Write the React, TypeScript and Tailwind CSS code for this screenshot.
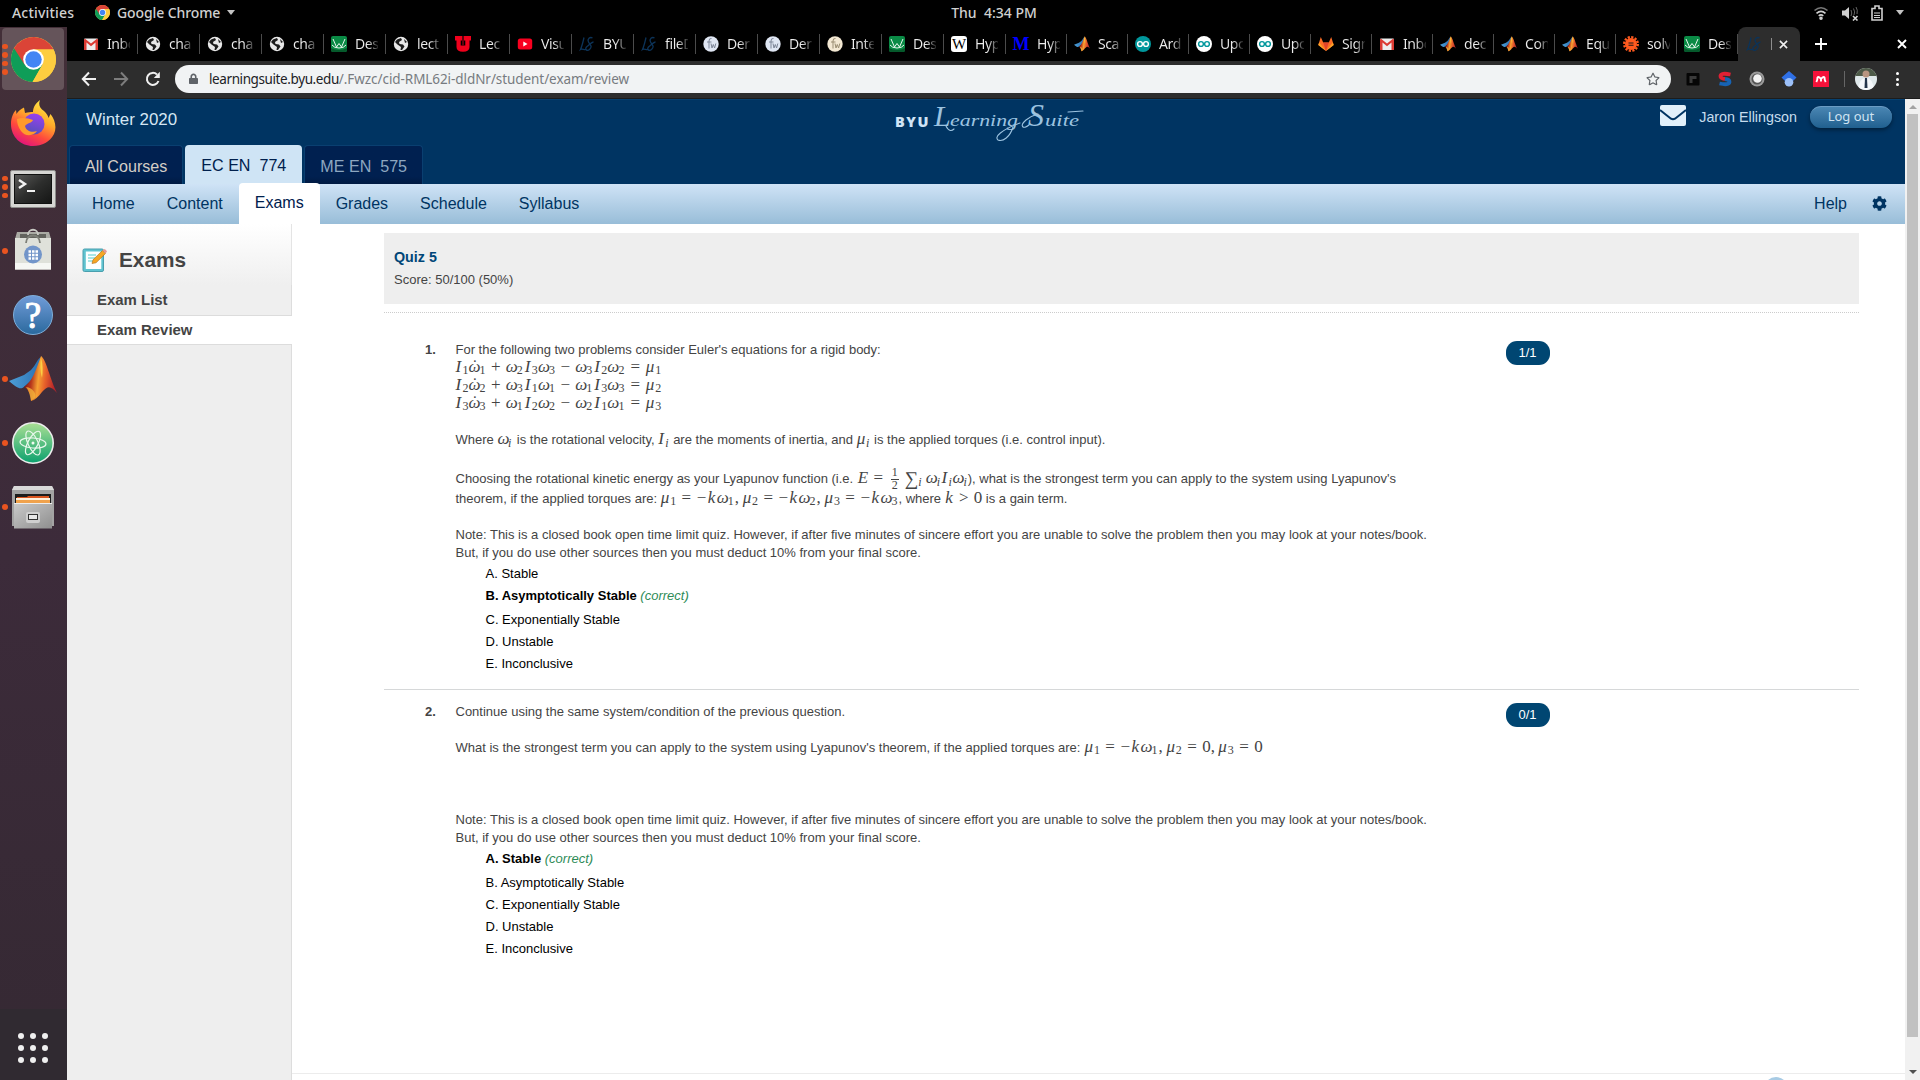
import React from "react";
import { FaCog, FaRegStar, FaLock } from "react-icons/fa";

/* ---------- favicons ---------- */

const ChromeLogo = ({ className }: { className: string }) => (
  <svg viewBox="0 0 48 48" className={className}>
    <circle cx="24" cy="24" r="24" fill="#fdcd40" />
    <path d="M24 24 L3.2 12 A24 24 0 0 0 23 48 L33.5 29.5Z" fill="#0f9d58" />
    <path d="M24 13 L45.3 13 A24 24 0 0 1 23 48 L33.5 29.5 A11 11 0 0 0 24 13Z" fill="#fdcd40" />
    <path d="M3.2 12 L14.5 29.5 L24 13 L45.3 13 A24 24 0 0 0 3.2 12Z" fill="#db4437" />
    <circle cx="24" cy="24" r="11" fill="#fff" />
    <circle cx="24" cy="24" r="8.8" fill="#4285f4" />
  </svg>
);

const Gmail = () => (
  <svg viewBox="0 0 16 16" className="size-4">
    <rect x="1" y="2.5" width="14" height="11.5" rx="1" fill="#eee" />
    <path d="M1 3.5 V14 H3.5 V6.5 L8 10.3 L12.500 6.500 V14 H15 V3.500 L14 2.700 L8 7.500 L2 2.700Z" fill="#dc3c34" />
  </svg>
);
const Globe = () => (
  <svg viewBox="0 0 16 16" className="size-4">
    <circle cx="8" cy="8" r="7.2" fill="#e8e8e8" />
    <path d="M4 3.500 L8 2 L9 4 L6 6 L6.500 8 L10 8.500 L11.500 10.500 L9 14 L7.500 14 L8 11 L4.500 8.500 L2 6Z" fill="#1c1c1c" />
    <path d="M11 3 L14 6 L12 7Z" fill="#1c1c1c" />
  </svg>
);
const Design = () => (
  <svg viewBox="0 0 16 16" className="size-4">
    <rect width="16" height="16" rx="2" fill="#0a8a45" />
    <path d="M0 12 Q8 16 16 12 V14 Q16 16 14 16 H2 Q0 16 0 14Z" fill="#05592b" />
    <path d="M2 3 L5.500 11 L8 7.500 L10.500 11 L14 3 M1 9 Q3 12 8 12 Q13 12 15 9" fill="none" stroke="#e9f6ee" strokeWidth="1" />
  </svg>
);
const Utah = () => (
  <svg viewBox="0 0 16 16" className="size-4">
    <path d="M0 0 H7 V4.500 H5.700 V9.500 H10.300 V4.500 H9 V0 H16 V4.500 H14.500 V11 Q14.500 15.800 8 15.800 Q1.500 15.800 1.500 11 V4.500 H0Z" fill="#f0001c" />
    <path d="M7.600 0 H8.400 V9 H7.600Z" fill="#f0001c" />
  </svg>
);
const YouTube = () => (
  <svg viewBox="0 0 16 16" className="size-4">
    <rect x="0.800" y="2.500" width="14.400" height="11" rx="2.500" fill="#f9001f" />
    <path d="M6.300 5.500 L10.500 8 L6.300 10.500Z" fill="#fff" />
  </svg>
);
const Suite = () => (
  <svg viewBox="0 0 16 16" className="size-4">
    <path
      d="M5 1.500 C4 6 3 10 1.500 13.500 C3 12.500 5 14 7 13.500 M13.500 2 C11 0.500 8 3 9.500 6 C11 9 14 10 10.500 13.500 C8 15.500 5 13 8 10.500 C10 9 13 6 14.500 6"
      fill="none"
      stroke="#0c3358"
      strokeWidth="1.300"
    />
  </svg>
);
const Wolfram = ({ tone = "#dfe6f3", ink = "#7d8698" }: { tone?: string; ink?: string }) => (
  <svg viewBox="0 0 16 16" className="size-4">
    <circle cx="8" cy="8" r="7.700" fill={tone} />
    <path d="M8.500 2.500 Q6 2 6 5 V12.500 M4 6 H8.500 M8 7.500 L9 12 L10.300 8.500 L11.600 12 L12.800 7.500" fill="none" stroke={ink} strokeWidth="1" />
  </svg>
);
const Wiki = () => (
  <span className="flex size-4 items-center justify-center overflow-hidden rounded-[3px] bg-white font-['Liberation_Serif'] text-[15px] leading-none text-black">W</span>
);
const BlueM = () => (
  <span className="flex size-4 items-center justify-center font-['Liberation_Serif'] text-[18px] leading-none font-bold text-[#0000ff]">M</span>
);
const Matlab = ({ className = "size-4" }: { className?: string }) => (
  <svg viewBox="0 0 48 46" className={className}>
    <defs>
      <linearGradient id="mlo" x1="0" y1="0" x2="1" y2="0.150">
        <stop offset="0" stopColor="#5d0f14" />
        <stop offset="0.300" stopColor="#b8371c" />
        <stop offset="0.500" stopColor="#f6a032" />
        <stop offset="0.700" stopColor="#e8622a" />
        <stop offset="1" stopColor="#b5232a" />
      </linearGradient>
      <linearGradient id="mlb" x1="0" y1="0" x2="1" y2="0">
        <stop offset="0" stopColor="#4d9fd8" />
        <stop offset="1" stopColor="#2a6fb0" />
      </linearGradient>
    </defs>
    <path d="M0 25 L15 19 L22 14 C27 9 28 3 32 1 L27 20 L16 30 C12 34 9 33 0 25Z" fill="url(#mlb)" />
    <path d="M32 0 C37 3 41 23 48 37 C42 30 39 29 33 36 C29 41 26 44 22 45 C22 38 19 33 15 31 C23 26 27 14 32 0Z" fill="url(#mlo)" />
    <path d="M22 45 C21 38 19 33 17 31 C24 32 28 38 26 42Z" fill="#f3b03a" opacity=".8" />
    <path d="M32 2 C34 8 34 16 33 22 C31 16 31 8 32 2Z" fill="#ffe04a" opacity=".8" />
  </svg>
);
const Arduino = ({ inverse = false }: { inverse?: boolean }) => (
  <svg viewBox="0 0 16 16" className="size-4">
    <circle cx="8" cy="8" r="8" fill={inverse ? "#fff" : "#00979c"} />
    <g fill="none" stroke={inverse ? "#00979c" : "#fff"} strokeWidth="1.400">
      <circle cx="5" cy="8" r="2.400" />
      <circle cx="11" cy="8" r="2.400" />
    </g>
  </svg>
);
const GitLab = () => (
  <svg viewBox="0 0 16 16" className="size-4">
    <path d="M8 15 L0.300 9 L2.800 1 L5.200 6.500 H10.800 L13.200 1 L15.700 9Z" fill="#fc6d26" />
    <path d="M8 15 L5.200 6.500 H10.800Z" fill="#e24329" />
    <path d="M8 15 L0.300 9 L1.200 6.500Z" fill="#fca326" />
    <path d="M8 15 L15.700 9 L14.800 6.500Z" fill="#fca326" />
  </svg>
);
const Burst = () => (
  <svg viewBox="0 0 16 16" className="size-4">
    <circle cx="8" cy="8" r="6" fill="#ff5a1f" />
    <circle cx="8" cy="8" r="6.800" fill="none" stroke="#ff5a1f" strokeWidth="2.400" strokeDasharray="2.200 1.360" />
    <path d="M5.500 7 H10.500 M5.500 9.300 H10.500" stroke="#1a1a1a" strokeWidth="1.100" />
  </svg>
);

/* ---------- browser tabs ---------- */

type Tab = { icon: React.ReactNode; title: string };

const wideTabs: Tab[] = [
  { icon: <Gmail />, title: "Inbo" },
  { icon: <Globe />, title: "cha" },
  { icon: <Globe />, title: "cha" },
  { icon: <Globe />, title: "cha" },
  { icon: <Design />, title: "Des" },
  { icon: <Globe />, title: "lect" },
  { icon: <Utah />, title: "Lec" },
  { icon: <YouTube />, title: "Visu" },
  { icon: <Suite />, title: "BYU" },
  { icon: <Suite />, title: "fileD" },
  { icon: <Wolfram />, title: "Der" },
  { icon: <Wolfram />, title: "Der" },
  { icon: <Wolfram tone="#f3e8d3" ink="#9a8d72" />, title: "Inte" },
  { icon: <Design />, title: "Des" },
  { icon: <Wiki />, title: "Hyp" },
];
const narrowTabs: Tab[] = [
  { icon: <BlueM />, title: "Hyp" },
  { icon: <Matlab />, title: "Sca" },
  { icon: <Arduino />, title: "Ard" },
  { icon: <Arduino inverse />, title: "Upc" },
  { icon: <Arduino inverse />, title: "Upc" },
  { icon: <GitLab />, title: "Sign" },
  { icon: <Gmail />, title: "Inbo" },
  { icon: <Matlab />, title: "dec" },
  { icon: <Matlab />, title: "Con" },
  { icon: <Matlab />, title: "Equ" },
  { icon: <Burst />, title: "solv" },
  { icon: <Design />, title: "Des" },
];

const BrowserTab = ({ tab, wide }: { tab: Tab; wide?: boolean }) => (
  <div className={(wide ? "w-[62px]" : "w-[61px]") + " flex h-5 shrink-0 items-center border-r border-[#4b4b4b] pl-[7px]"}>
    {tab.icon}
    <span className="ml-2 w-[22.500px] overflow-hidden bg-linear-to-r from-[#ededed] from-55% to-[#ededed]/15 bg-clip-text text-[14px] leading-5 tracking-[-0.400px] whitespace-nowrap text-transparent">
      {tab.title}
    </span>
  </div>
);

/* ---------- dock ---------- */

const Firefox = () => (
  <svg viewBox="0 0 46 46" className="size-[46px]">
    <defs>
      <linearGradient id="ff" x1="0.800" y1="0" x2="0.300" y2="1">
        <stop offset="0" stopColor="#fff04a" />
        <stop offset="0.400" stopColor="#ffab2a" />
        <stop offset="0.700" stopColor="#ff4a3c" />
        <stop offset="1" stopColor="#e0127e" />
      </linearGradient>
      <linearGradient id="ffp" x1="0.700" y1="0" x2="0.400" y2="1">
        <stop offset="0" stopColor="#9a40f0" />
        <stop offset="1" stopColor="#5350b8" />
      </linearGradient>
    </defs>
    <path
      d="M30 0 C28 5 30 8 34 11 C36 13 38 15 38.500 18 L40.500 14 C45 20 47 27 44 34 C40 42 32 46 23 46 C11 46 1 37 1 24 C1 18 3 13 6 10 L6.500 14 C8 11 11 9 14 7.500 L15 13 C18 12 21 12 23 12 C23 7 26 3 30 0Z"
      fill="url(#ff)"
    />
    <circle cx="24" cy="24" r="10.500" fill="url(#ffp)" />
    <path d="M7 19 C12 17 18 18 23 20 C22 23 17 23 15 26 C16 31 22 33 27 31 C24 36 15 37 11 31 C8 27 7 23 7 19Z" fill="#ff9a2c" />
  </svg>
);
const Terminal = () => (
  <svg viewBox="0 0 46 38" className="mt-[3px] h-[38px] w-[46px]">
    <defs>
      <linearGradient id="tm" x1="0" y1="0" x2="1" y2="1">
        <stop offset="0" stopColor="#5a5a58" />
        <stop offset="0.500" stopColor="#2d2e2d" />
        <stop offset="1" stopColor="#151615" />
      </linearGradient>
    </defs>
    <rect x="0.500" y="0.500" width="45" height="37" rx="1.500" fill="#d6d6d3" stroke="#8c8c8a" />
    <rect x="4" y="4" width="38" height="30" fill="#101110" />
    <rect x="5" y="5" width="36" height="28" fill="url(#tm)" />
    <path d="M9 10 L15 14 L9 18" fill="none" stroke="#f2f2f2" strokeWidth="2.400" />
    <path d="M17 21 H25" stroke="#f2f2f2" strokeWidth="2" />
  </svg>
);
const Software = () => (
  <svg viewBox="0 0 38 42" className="mb-[4px] h-[42px] w-[38px]">
    <path d="M3 4 H35 L37 11 H1Z" fill="#a9aaa3" />
    <path d="M6 6 H32 V11 H6Z" fill="#63645e" />
    <path d="M1 10 H37 L37 41.500 H1Z" fill="#dfe1da" />
    <path d="M1 35 H37 V41.500 H1Z" fill="#f6f7f4" />
    <path d="M14 7 C14 0 24 0 24 7" fill="none" stroke="#c9cac4" strokeWidth="1.800" />
    <path d="M12 15 C12 5 26 5 26 15" fill="none" stroke="#7e8078" strokeWidth="1.800" />
    <circle cx="19" cy="26.500" r="9" fill="#7295c9" />
    <path d="M14.500 23.500h2.500M18 23.500h2.500M21.500 23.500h2.500M14.500 27h2.500M18 27h2.500M21.500 27h2.500M14.500 30.500h2.500M18 30.500h2.500M21.500 30.500h2.500" stroke="#fff" strokeWidth="2.400" />
  </svg>
);
const Help = () => (
  <div className="flex size-[40px] items-center justify-center rounded-full border border-[#7fb0dc] bg-linear-to-b from-[#6f9bd8] to-[#2a6a9e] font-['Liberation_Serif'] text-[37px] leading-none text-white [-webkit-text-stroke:1px_#fff]">
    ?
  </div>
);
const Atom = () => (
  <svg viewBox="0 0 42 42" className="size-[42px]">
    <defs>
      <linearGradient id="at" x1="0" y1="0" x2="0" y2="1">
        <stop offset="0" stopColor="#aadf94" />
        <stop offset="1" stopColor="#0ba16e" />
      </linearGradient>
    </defs>
    <circle cx="21" cy="21" r="20.200" fill="url(#at)" stroke="#ececec" strokeWidth="1.600" />
    <g fill="none" stroke="#e9f7ec" strokeWidth="1.200">
      <ellipse cx="21" cy="21" rx="13" ry="5" transform="rotate(5 21 21)" />
      <ellipse cx="21" cy="21" rx="13" ry="5" transform="rotate(65 21 21)" />
      <ellipse cx="21" cy="21" rx="13" ry="5" transform="rotate(118 21 21)" />
    </g>
    <circle cx="21" cy="21" r="1.500" fill="#f2fbf3" />
  </svg>
);
const Files = () => (
  <svg viewBox="0 0 42 44" className="mb-px h-[44px] w-[42px]">
    <defs>
      <linearGradient id="fl" x1="0" y1="0" x2="1" y2="1">
        <stop offset="0" stopColor="#c9c9c9" />
        <stop offset="1" stopColor="#8f8f8f" />
      </linearGradient>
    </defs>
    <path d="M2 1 H40 L42 5 V41 H0 V5Z" fill="#a3a3a3" />
    <path d="M2 1 H40 L42 5 H0Z" fill="#d9d9d9" />
    <rect x="3" y="9" width="36" height="12" fill="#1c1c1c" />
    <path d="M5 12 H15 L16 11 H37 V19 H4Z" fill="#d9541e" />
    <rect x="4" y="13" width="34" height="2" fill="#fff1dc" />
    <rect x="4" y="15" width="34" height="4" fill="#f0a24c" />
    <path d="M2 18.500 H40 V43.500 H2Z" fill="url(#fl)" />
    <path d="M2 18.500 H40" stroke="#ededed" />
    <rect x="14" y="27" width="14" height="11" rx="2" fill="#cfcfcf" />
    <rect x="16.500" y="29.500" width="9" height="5" fill="#e8e8e8" stroke="#333" />
  </svg>
);

const dock: { icon: React.ReactNode; dots: number; active?: boolean }[] = [
  { icon: <ChromeLogo className="size-[45px]" />, dots: 4, active: true },
  { icon: <Firefox />, dots: 0 },
  { icon: <Terminal />, dots: 3 },
  { icon: <Software />, dots: 1 },
  { icon: <Help />, dots: 0 },
  { icon: <Matlab className="h-[46px] w-[48px]" />, dots: 1 },
  { icon: <Atom />, dots: 1 },
  { icon: <Files />, dots: 1 },
];

const Dock = () => (
  <aside className="flex w-[67px] shrink-0 flex-col bg-linear-to-b from-[#432f38] via-[#3c2b3a] to-[#352933]">
    {dock.map((d, n) => (
      <div key={n} className="flex h-16 items-center px-0.5">
        <div className={(d.active ? "bg-[#65545a] " : "") + "flex h-[62px] w-[62px] items-center rounded-[4px]"}>
          <div className="flex w-1.5 shrink-0 flex-col items-center gap-[3px]">
            {Array.from({ length: d.dots }, (_, k) => (
              <i key={k} className="size-[5.500px] rounded-full bg-[#e95420]" />
            ))}
          </div>
          <div className="flex w-[50px] shrink-0 justify-center">{d.icon}</div>
        </div>
      </div>
    ))}
    <div className="mt-auto flex h-[71px] items-center justify-center bg-[#302a31] pt-[7px] pr-px">
      <div className="grid grid-cols-3 gap-1.5">
        {Array.from({ length: 9 }, (_, k) => (
          <i key={k} className="size-1.5 rounded-full bg-[#f0f0f0]" />
        ))}
      </div>
    </div>
  </aside>
);

/* ---------- mathematics ---------- */

type Cell = [glyph: string, kind: "i" | "r" | "o" | "s" | "t" | "d" | "b", width: number];

const kinds = {
  i: "text-[17px] italic",
  r: "text-[17px]",
  o: "text-[17px] text-center",
  s: "text-[12px] align-[-2px]",
  t: "text-[12px] italic align-[-3px]",
  d: "text-[17px] align-[1px]",
  b: "text-[19px] align-[-2px]",
};

const Formula = ({ cells }: { cells: Cell[] }) => (
  <span className="font-['Liberation_Serif'] whitespace-nowrap">
    {cells.map(([g, k, w], n) => (
      <span key={n} className={kinds[k] + " inline-block leading-[0]"} style={{ width: w }}>
        {g}
      </span>
    ))}
  </span>
);

const euler = (a: string, b: string, c: string): Cell[] => [
  ["I", "i", 7], [a, "s", 6], ["ω", "i", 3.5], ["˙", "d", 7.5], [a, "s", 6.3], ["+", "o", 20],
  ["ω", "i", 11], [b, "s", 8], ["I", "i", 7], [c, "s", 6.2], ["ω", "i", 11], [c, "s", 6.2], ["−", "o", 20],
  ["ω", "i", 11], [c, "s", 8], ["I", "i", 7], [b, "s", 6.2], ["ω", "i", 11.2], [b, "s", 6.2], ["=", "o", 21],
  ["μ", "i", 9.5], [a, "s", 6],
];
const torque = (n: string, comma: boolean): Cell[] => [
  ["μ", "i", 9.4], [n, "s", 6], ["=", "o", 20.500], ["−", "r", 11], ["k", "i", 9], ["ω", "i", 11], [n, "s", 7],
  ...(comma ? ([[",", "r", 8]] as Cell[]) : []),
];

/* ---------- questions ---------- */

const Option = ({ text, correct }: { text: string; correct?: boolean }) => (
  <li className={correct ? "h-6 font-bold" : "h-[22px]"}>
    {text}
    {correct && <em className="font-normal text-[#2e8b57]"> (correct)</em>}
  </li>
);

const Note = () => (
  <p>
    Note: This is a closed book open time limit quiz. However, if after five minutes of sincere effort you are unable to solve the problem then you may look at your notes/book.
    <br />
    But, if you do use other sources then you must deduct 10% from your final score.
  </p>
);

const answers = ["A. Stable", "B. Asymptotically Stable", "C. Exponentially Stable", "D. Unstable", "E. Inconclusive"];

const Question = ({ no, score, correct, children }: { no: number; score: string; correct: number; children: React.ReactNode }) => (
  <div className="flex text-[13px] leading-[18px] text-[#444]">
    <b className="ml-[41px] w-[30.500px] shrink-0">{no}.</b>
    <div className="w-[1050px] shrink-0 whitespace-nowrap">
      {children}
      <ul className="mt-[3px] ml-[30px] text-black">
        {answers.map((a, n) => (
          <Option key={a} text={a} correct={n === correct} />
        ))}
      </ul>
    </div>
    <span className="flex h-6 w-11 items-center justify-center rounded-[11px] bg-[#004672] text-white">{score}</span>
  </div>
);

/* ---------- page ---------- */

const Logo = () => (
  <div className="flex h-[46px] items-start pl-[7px]">
    <span className="pt-[15px] font-['Open_Sans'] text-[14.500px] leading-none font-extrabold tracking-[1.600px] text-[#cfe4f6]">BYU</span>
    <svg viewBox="0 0 152 46" className="ml-[2px] h-[46px] w-[152px]" fill="#9cc3e0">
      <g fontFamily="Liberation Serif" fontStyle="italic" fontWeight="400">
        <text x="2" y="26" fontSize="30">L</text>
        <text x="18" y="26" fontSize="17" textLength="68" lengthAdjust="spacingAndGlyphs">earning</text>
        <text x="96" y="26" fontSize="32">S</text>
        <text x="113" y="26" fontSize="17" textLength="34" lengthAdjust="spacingAndGlyphs">uite</text>
      </g>
      <g fill="none" stroke="#9cc3e0" strokeWidth="1.100" strokeLinecap="round">
        <path d="M81 27 C78 37 71 42 66 40 C62 37 69 30 88 23" />
        <path d="M97 25 C91 30 87 26 94 20 C98 17 102 15 106 14" />
        <path d="M14 26 C17 32 20 31 22 29" />
        <path d="M136 12 L151 11" />
      </g>
    </svg>
  </div>
);

const courseTab = "flex h-[39px] items-center rounded-t-[4px] px-4 whitespace-pre";

export default function App() {
  return (
    <div className="flex h-[1080px] w-[1920px] flex-col overflow-hidden bg-black font-['Liberation_Sans',sans-serif]">
      {/* system bar */}
      <div className="grid h-[27px] shrink-0 grid-cols-[1fr_auto_1fr] items-center pb-[2px] font-['Noto_Sans'] text-[14px] font-medium text-[#d0d0d0]">
        <div className="flex items-center pl-3">
          <span className="w-[83px] tracking-[0.200px]">Activities</span>
          <ChromeLogo className="size-[15px]" />
          <span className="ml-[7px] w-[110px] tracking-[-0.100px]">Google Chrome</span>
          <i className="border-x-[4.500px] border-t-[5px] border-x-transparent border-t-[#c4c4c4]" />
        </div>
        <span className="pl-[68px] whitespace-pre">Thu  4:34 PM</span>
        <div className="flex items-center justify-end pr-4">
          <svg viewBox="0 0 16 16" className="mr-3 size-4" fill="none" stroke="#d0d0d0" strokeWidth="1.600">
            <path d="M1.500 5.500 Q8 0 14.500 5.500" stroke="#777" />
            <path d="M3.500 8.300 Q8 4.500 12.500 8.300" />
            <path d="M5.700 10.800 Q8 9 10.300 10.800" />
            <circle cx="8" cy="13.300" r="1" fill="#d0d0d0" />
          </svg>
          <svg viewBox="0 0 18 16" className="mr-3 h-4 w-[18px]">
            <path d="M1 5.500 H4 L8 2 V14 L4 10.500 H1Z" fill="#d0d0d0" />
            <path d="M10 5 Q11.500 8 10 11 M12.500 3.500 Q14.500 7 13 10 M15 2 Q17 5 16 9" stroke="#666" fill="none" />
            <path d="M12 11 L16.500 15.500 M16.500 11 L12 15.500" stroke="#d0d0d0" strokeWidth="1.600" />
          </svg>
          <svg viewBox="0 0 12 16" className="mr-[13px] h-4 w-3" fill="none" stroke="#d0d0d0">
            <path d="M1 3.500 H4 V1 H8 V3.500 H11 V15 H1Z" strokeWidth="1.600" />
            <path d="M3 8 H9 M3 10.500 H9 M3 12.500 H9" strokeWidth="1.200" />
          </svg>
          <i className="border-x-[4.500px] border-t-[5px] border-x-transparent border-t-[#c4c4c4]" />
        </div>
      </div>

      <div className="flex min-h-0 grow">
        <Dock />
        <div className="flex min-w-0 grow flex-col">
          {/* tab strip */}
          <div className="flex h-[34px] shrink-0 items-center bg-black pl-[9px] font-['Noto_Sans'] text-white">
            {wideTabs.map((t, n) => (
              <BrowserTab key={n} tab={t} wide />
            ))}
            {narrowTabs.map((t, n) => (
              <BrowserTab key={n} tab={t} />
            ))}
            <div className="flex h-full w-[62px] shrink-0 items-center rounded-t-[8px] bg-[#2d2d2d] pl-2">
              <Suite />
              <i className="ml-[9px] h-3 w-px bg-[#8d8d8d]" />
              <svg viewBox="0 0 10 10" className="ml-[7px] size-[9px]">
                <path d="M1 1 L9 9 M9 1 L1 9" stroke="#eee" strokeWidth="1.800" />
              </svg>
            </div>
            <svg viewBox="0 0 12 12" className="ml-[15px] size-3">
              <path d="M6 0 V12 M0 6 H12" stroke="#fff" strokeWidth="1.900" />
            </svg>
            <svg viewBox="0 0 10 10" className="ml-[70px] size-[10px]">
              <path d="M1 1 L9 9 M9 1 L1 9" stroke="#fff" strokeWidth="1.900" />
            </svg>
          </div>

          {/* toolbar */}
          <div className="flex h-[38px] shrink-0 items-center border-b border-[#1c1c1c] bg-[#2d2d2d] pb-px pl-[14px] font-['Noto_Sans']">
            <svg viewBox="0 0 16 16" className="size-4" fill="none" stroke="#f0f0f0" strokeWidth="2">
              <path d="M15 8 H2 M8 1.500 L1.800 8 L8 14.500" />
            </svg>
            <svg viewBox="0 0 16 16" className="ml-4 size-4" fill="none" stroke="#7d7d7d" strokeWidth="2">
              <path d="M1 8 H14 M8 1.500 L14.200 8 L8 14.500" />
            </svg>
            <svg viewBox="0 0 16 16" className="ml-4 size-4" fill="none" stroke="#f0f0f0" strokeWidth="2">
              <path d="M13.500 10 A6 6 0 1 1 12 3.500" />
              <path d="M14.800 0.800 V7 H8.800Z" fill="#f0f0f0" stroke="none" />
            </svg>
            <div className="ml-[14px] flex h-7 w-[1496px] items-center rounded-full bg-[#f1f3f4] pl-[14px] text-[13.500px]">
              <FaLock className="w-[9px] text-[#5f6368]" />
              <span className="ml-[11px] grow tracking-[-0.070px] text-[#777b80]">
                <span className="tracking-[-0.400px] text-[#202124]">learningsuite.byu.edu</span>/.Fwzc/cid-RML62i-dldNr/student/exam/review
              </span>
              <FaRegStar className="mr-[11px] size-[14px] text-[#5f6368]" />
            </div>
            <div className="ml-[14px] flex items-center gap-4">
              <svg viewBox="0 0 16 16" className="size-4">
                <rect x="1.500" y="2" width="13" height="12.500" rx="1" fill="#060606" />
                <path d="M4.500 12 V5 H11.500 V8 H7.500 V12Z" fill="#3a3a3a" />
              </svg>
              <svg viewBox="0 0 16 16" className="size-4" fill="none" strokeWidth="3.800">
                <path d="M13.500 3.500 Q4 1.500 3.500 5 Q3.500 7.500 8 8" stroke="#e02034" />
                <path d="M8 8 Q12.500 8.500 12.500 11 Q12 14.500 2.500 12.500" stroke="#1763b4" />
              </svg>
              <svg viewBox="0 0 16 16" className="size-4">
                <circle cx="8" cy="8" r="7.500" fill="#9a9a9a" />
                <circle cx="8" cy="8" r="5.500" fill="#555" />
                <circle cx="8.500" cy="7.500" r="4.300" fill="#f3f3f3" />
              </svg>
              <svg viewBox="0 0 16 16" className="size-4">
                <path d="M8 0 L15.500 6.500 L11 11 H5 L0.500 6.500Z" fill="#2f70e6" />
                <circle cx="8" cy="11.300" r="4.300" fill="#9cc0f8" />
              </svg>
              <svg viewBox="0 0 16 16" className="size-4">
                <rect width="16" height="16" fill="#f5123a" />
                <path d="M3.300 11 Q4.500 9 4.500 6.500 Q5.500 5 8 8 Q10.500 5 11.500 6.500 Q11.500 9 12.700 11 M8 8 V10.500" fill="none" stroke="#fff" strokeWidth="1.900" />
              </svg>
              <i className="-mr-[6px] -ml-px h-4 w-px bg-[#666]" />
              <svg viewBox="0 0 22 22" className="size-[22px] rounded-full">
                <rect width="22" height="22" fill="#dfe8ea" />
                <path d="M0 0 H22 V8 H0Z" fill="#4d5a48" />
                <circle cx="11" cy="6" r="3.500" fill="#b89580" />
                <path d="M3 22 Q4 10 11 10 Q18 10 19 22Z" fill="#f4f7fa" />
                <path d="M10 10 H12 L12.500 20 H9.500Z" fill="#24344a" />
              </svg>
              <div className="ml-[3px] flex flex-col gap-[2.500px]">
                <i className="size-[3px] rounded-full bg-white" />
                <i className="size-[3px] rounded-full bg-white" />
                <i className="size-[3px] rounded-full bg-white" />
              </div>
            </div>
          </div>

          <div className="flex min-h-0 grow">
            <div className="flex w-[1838px] shrink-0 flex-col bg-white">
              {/* site header */}
              <header className="flex h-[85px] shrink-0 flex-col justify-between border-t border-[#06406f] bg-[#003462]">
                <div className="grid h-[44px] grid-cols-[1fr_auto_1fr]">
                  <span className="pt-[10px] pl-[19px] text-[16.900px] leading-5 text-[#d5e6f3]">Winter 2020</span>
                  <Logo />
                  <div className="flex items-start justify-end pt-[5px] pr-[13px]">
                    <svg viewBox="0 0 26 21" className="mr-[13px] h-[21px] w-[26px]">
                      <rect width="26" height="21" rx="2" fill="#e2f0fa" />
                      <path d="M0 5 L11 13.700 Q13 15 15 13.700 L26 5" fill="none" stroke="#003462" strokeWidth="2" />
                    </svg>
                    <span className="mr-[13px] pt-[4px] text-[14.300px] leading-4 text-[#c5dced]">Jaron Ellingson</span>
                    <span className="mt-px flex h-[22px] w-[82px] items-center justify-center rounded-full border-t border-[#6b9bc4] bg-linear-to-b from-[#4a86b3] to-[#20608f] pb-px font-['Noto_Sans'] text-[13px] text-[#cfe3f2] shadow-[0_2px_4px_rgba(0,0,0,0.400)]">
                      Log out
                    </span>
                  </div>
                </div>
                <div className="flex items-end gap-[2px] pl-[2px] text-[16.100px]">
                  <span className={courseTab + " border border-b-0 border-[#0a3f70] bg-linear-to-b from-[#002050] from-80% to-[#001a42] px-[15px] pt-[2px] text-[#d3cdc6]"}>All Courses</span>
                  <span className={courseTab + " bg-[#cfe4f5] pt-px text-[#00204d]"}>EC EN  774</span>
                  <span className={courseTab + " border border-b-0 border-[#0a3f70] bg-linear-to-b from-[#002050] from-80% to-[#001a42] px-[15px] pt-[2px] text-[#8da7c0]"}>ME EN  575</span>
                </div>
              </header>

              {/* section navigation */}
              <nav className="flex h-10 shrink-0 items-center bg-linear-to-b from-[#cfe3f6] to-[#98bdd8] pl-[9px] text-[16px] text-[#003462]">
                <span className="px-4">Home</span>
                <span className="px-4">Content</span>
                <span className="-mt-px flex h-[41px] items-center rounded-t-[4px] bg-white px-4 pb-px text-[#00204d]">Exams</span>
                <span className="px-4">Grades</span>
                <span className="px-4">Schedule</span>
                <span className="px-4">Syllabus</span>
                <span className="mr-[25px] ml-auto">Help</span>
                <FaCog className="mr-[18px] mb-px size-[15px]" />
              </nav>

              <div className="flex min-h-0 grow">
                {/* sidebar */}
                <aside className="flex w-[225px] shrink-0 flex-col font-bold text-[#444]">
                  <div className="flex h-[61px] items-center border-r border-[#e4e4e4] bg-linear-to-b from-white to-[#efefef] pt-[10px] pl-[15px] text-[20.800px]">
                    <svg viewBox="0 0 26 26" className="mr-[11px] size-[26px]">
                      <rect x="1" y="2" width="20.500" height="22.500" rx="1.500" fill="#5fc3d0" stroke="#4a9fae" />
                      <rect x="3.800" y="4.500" width="15.500" height="17.500" fill="#fbffff" />
                      <path d="M6 8 H14 M6 11 H13 M6 14 H11" stroke="#5cc" />
                      <path d="M10 16.500 L11 12.800 L20.500 3.500 L23.500 6.500 L14 15.800Z" fill="#f5a623" stroke="#a96c17" strokeWidth=".6" />
                      <path d="M20.500 3.500 L22 2 Q24 2 25 4.500 L23.500 6.500Z" fill="#e79a94" />
                    </svg>
                    Exams
                  </div>
                  <div className="flex h-[30px] items-center border-r border-[#ddd] bg-[#efefef] pl-[30px] text-[14.950px]">Exam List</div>
                  <div className="flex h-[30px] items-center border-y border-[#dcdcdc] bg-white pl-[30px] text-[14.950px]">Exam Review</div>
                  <div className="grow border-r border-[#ddd] bg-[#eee]" />
                </aside>

                {/* exam review */}
                <main className="flex grow flex-col">
                  <div className="mr-[46px] ml-[92px] flex h-[849px] shrink-0 flex-col">
                    <section className="mt-[9px] h-[71px] shrink-0 bg-[#eee] pt-[14px] pl-[10px]">
                      <h1 className="text-[14.300px] leading-5 font-bold text-[#004678]">Quiz 5</h1>
                      <p className="mt-[4px] text-[13px] leading-[18px] text-[#444]">Score: 50/100 (50%)</p>
                    </section>
                    <hr className="mt-2 border-dotted border-[#ccc]" />
                    <section className="pt-[28px]">
                      <Question no={1} score="1/1" correct={1}>
                        <p>
                          For the following two problems consider Euler's equations for a rigid body:
                          <br />
                          <Formula cells={euler("1", "2", "3")} />
                          <br />
                          <Formula cells={euler("2", "3", "1")} />
                          <br />
                          <Formula cells={euler("3", "1", "2")} />
                        </p>
                        <p className="mt-[18px]">
                          Where <Formula cells={[["ω", "i", 10.5], ["i", "t", 5.3]]} /> is the rotational velocity,{" "}
                          <Formula cells={[["I", "i", 7], ["i", "t", 4.300]]} /> are the moments of inertia, and{" "}
                          <Formula cells={[["μ", "i", 9.300], ["i", "t", 4.500]]} /> is the applied torques (i.e. control input).
                        </p>
                        <p className="mt-[18px]">
                          Choosing the rotational kinetic energy as your Lyapunov function (i.e.{" "}
                          <Formula cells={[["", "r", 1], ["E", "i", 12], ["=", "o", 17], ["", "r", 4]]} />
                          <span className="mr-[6px] mb-[-1px] inline-flex w-2 flex-col items-center align-[7px] font-['Liberation_Serif'] text-[12px] leading-[11px]">
                            <span className="border-b border-[#444] px-px pb-px">1</span>
                            <span>2</span>
                          </span>
                          <Formula
                            cells={[["∑", "b", 13.300], ["i", "t", 7.700], ["ω", "i", 11], ["i", "t", 4.700], ["I", "i", 7], ["i", "t", 4], ["ω", "i", 11], ["i", "t", 4.200]]}
                          />
                          ), what is the strongest term you can apply to the system using Lyapunov's
                        </p>
                        <p>
                          theorem, if the applied torques are: <Formula cells={[...torque("1", true), ...torque("2", true), ...torque("3", false)]} />, where{" "}
                          <Formula cells={[["", "r", 0.5], ["k", "i", 8.500], [">", "o", 20], ["0", "r", 8.500]]} /> is a gain term.
                        </p>
                        <div className="mt-[18px]">
                          <Note />
                        </div>
                      </Question>
                    </section>
                    <hr className="mt-[12px] border-[#d6d8d9]" />
                    <section className="pt-[13px]">
                      <Question no={2} score="0/1" correct={0}>
                        <p>Continue using the same system/condition of the previous question.</p>
                        <p className="mt-[18px]">
                          What is the strongest term you can apply to the system using Lyapunov's theorem, if the applied torques are:{" "}
                          <Formula
                            cells={[["", "r", 0.5], ...torque("1", true), ["μ", "i", 9.400], ["2", "s", 6], ["=", "o", 20.500], ["0", "r", 8.500], [",", "r", 7.500], ["μ", "i", 9.400], ["3", "s", 6], ["=", "o", 20.500], ["0", "r", 8.500]]}
                          />
                        </p>
                        <div className="mt-[54px]">
                          <Note />
                        </div>
                      </Question>
                    </section>
                  </div>
                  <footer className="flex grow justify-end overflow-hidden border-t border-[#ececec] pt-[3px] pr-[117px]">
                    <i className="size-6 shrink-0 rounded-full bg-[#a8cbe4]" />
                  </footer>
                </main>
              </div>
            </div>

            {/* scrollbar */}
            <div className="flex w-[15px] shrink-0 flex-col items-center bg-[#f1f1f1]">
              <i className="mt-[6px] border-x-4 border-b-4 border-x-transparent border-b-[#a3a3a3]" />
              <i className="mt-[5px] h-[923px] w-[11px] bg-[#c1c1c1]" />
              <i className="mt-[33px] border-x-4 border-t-4 border-x-transparent border-t-[#505050]" />
            </div>
          </div>
        </div>
      </div>
    </div>
  );
}
